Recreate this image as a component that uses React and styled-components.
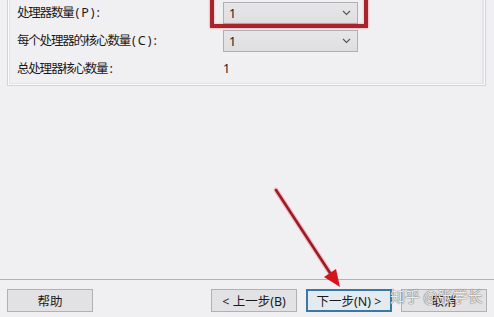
import React from "react";
import styled, { createGlobalStyle } from "styled-components";

const Global = createGlobalStyle`
  html, body { margin: 0; padding: 0; }
  body {
    background: #f0eff2;
    width: 494px;
    height: 317px;
    overflow: hidden;
    font-family: "Noto Sans", "Noto Sans CJK SC", sans-serif;
    color: #1a1a1a;
  }
`;

const Page = styled.div`
  position: relative;
  width: 494px;
  height: 317px;
  display: flex;
  flex-direction: column;
`;

const GroupBox = styled.div`
  margin: -12px 8px 0 7px;
  border: 1px solid #d4d2d6;
  box-shadow: inset 1px 1px 0 #fbfafc, inset -1px -1px 0 #fbfafc, inset 2px 2px 0 #e4e2e6, inset -3px -2px 0 #e4e2e6;
  padding: 13px 0 5px 9px;
  display: grid;
  grid-template-columns: 206px 135px;
  grid-auto-rows: 22px;
  row-gap: 6px;
  align-items: center;
`;

const Label = styled.div`
  font-family: "Noto Sans", "Noto Sans CJK SC", sans-serif;
  font-size: 12.5px;
  letter-spacing: -1.2px;
  white-space: nowrap;
  line-height: 22px;
`;

const Key = styled.span`
  letter-spacing: 2px;
  margin-left: 2px;
`;

const ValueText = styled.div`
  font-size: 12.5px;
  line-height: 22px;
  padding-left: 0;
`;

const ComboWrap = styled.div`
  position: relative;
  height: 22px;
`;

const Combo = styled.div`
  box-sizing: border-box;
  height: 22px;
  width: 135px;
  border: 1px solid #b1afb3;
  background: linear-gradient(#e6e5e8, #dfdee1);
  display: flex;
  align-items: center;
  justify-content: space-between;
  padding: 0 6px 0 5px;
  font-size: 12.5px;
`;

const Highlight = styled.div`
  position: absolute;
  left: -13px;
  right: -10px;
  top: -24px;
  bottom: -4px;
  border: 4px solid #a9232b;
  box-shadow: 0 0 2px rgba(220, 60, 70, 0.6), inset 0 0 2px rgba(220, 60, 70, 0.5);
  pointer-events: none;
`;

const Spacer = styled.div`
  flex: 1;
`;

const Footer = styled.div`
  border-top: 1px solid #b3b1b5;
  padding: 9px 7px 5px 7px;
  display: flex;
  align-items: center;
  gap: 9px;
`;

const Button = styled.div`
  box-sizing: border-box;
  width: 86px;
  height: 23px;
  border: ${(p) => (p.$default ? "2px solid #3b78a6" : "1px solid #b2b0b4")};
  background: ${(p) => (p.$default ? "#e3ebf1" : "#e2e1e4")};
  display: flex;
  align-items: center;
  justify-content: center;
  font-family: "Noto Sans", "Noto Sans CJK SC", sans-serif;
  font-size: 12.5px;
  color: #1a1a1a;
  white-space: nowrap;
  margin-left: ${(p) => (p.$push ? "auto" : "0")};
`;

const Watermark = styled.div`
  position: absolute;
  left: 390px;
  top: 285px;
  font-family: "Noto Sans CJK SC", sans-serif;
  font-size: 15px;
  color: rgba(255, 255, 255, 0.88);
  text-shadow: 0 0 1px rgba(90, 90, 90, 0.9), 0 0 1px rgba(90, 90, 90, 0.9);
  white-space: nowrap;
  pointer-events: none;
`;

const Overlay = styled.svg`
  position: absolute;
  left: 0;
  top: 0;
  pointer-events: none;
`;

const Chevron = () => (
  <svg width="9" height="6" viewBox="0 0 9 6">
    <path d="M1 1 L4.5 4.5 L8 1" fill="none" stroke="#555" strokeWidth="1.1" />
  </svg>
);

export default function App() {
  return (
    <>
      <Global />
      <Page>
        <GroupBox>
          <Label>处理器数量<Key>(P):</Key></Label>
          <ComboWrap>
            <Combo>
              <span>1</span>
              <Chevron />
            </Combo>
            <Highlight />
          </ComboWrap>
          <Label>每个处理器的核心数量<Key>(C):</Key></Label>
          <ComboWrap>
            <Combo>
              <span>1</span>
              <Chevron />
            </Combo>
          </ComboWrap>
          <Label>总处理器核心数量<Key>:</Key></Label>
          <ValueText>1</ValueText>
        </GroupBox>
        <Spacer />
        <Footer>
          <Button>帮助</Button>
          <Button $push>&lt; 上一步(B)</Button>
          <Button $default>下一步(N) &gt;</Button>
          <Button>取消</Button>
        </Footer>
        <Watermark>知乎 @张学长</Watermark>
        <Overlay width="494" height="317" viewBox="0 0 494 317">
          <line x1="276" y1="190" x2="332" y2="276" stroke="rgba(240,120,130,0.45)" strokeWidth="5" strokeLinecap="round" />
          <line x1="276" y1="190" x2="332" y2="276" stroke="#9c1c24" strokeWidth="2.6" strokeLinecap="round" />
          <polygon points="340,287 324,277 336,269" fill="#d3161e" />
        </Overlay>
      </Page>
    </>
  );
}
